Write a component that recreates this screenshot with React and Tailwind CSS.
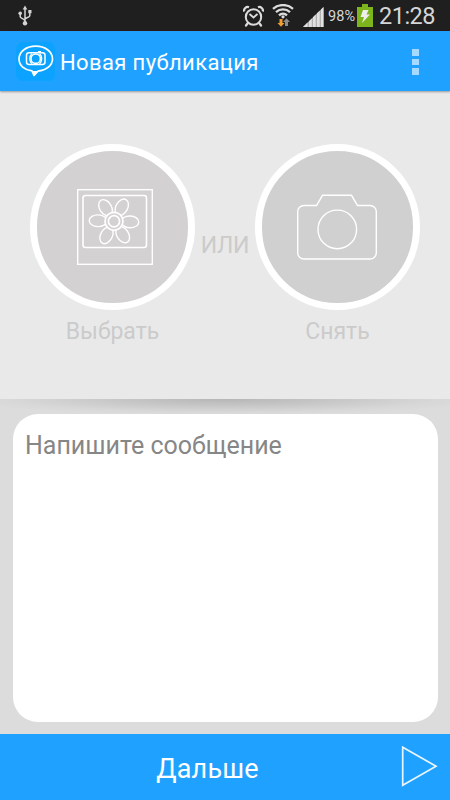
import { useState } from 'react'

function UsbIcon() {
  return (
    <svg className="w-[14px] h-[22px]" viewBox="0 0 14 22" fill="none" stroke="#d4d4d4" strokeWidth="1.5">
      <path d="M7 3v15M2.200 8.500v3.200c0 1.800 4.800 2.200 4.800 4.300M11.800 7.500v3.200c0 1.800-4.800 1.800-4.800 3.800" />
      <path d="M7 0.500l2.300 4H4.700zM10.300 5h3.200v3.200h-3.200z" fill="#d4d4d4" stroke="none" />
      <circle cx="2.200" cy="8.300" r="1.800" fill="#d4d4d4" stroke="none" />
      <circle cx="7" cy="18.300" r="2.200" fill="#d4d4d4" stroke="none" />
    </svg>
  )
}

function AlarmIcon() {
  return (
    <svg className="w-[21px] h-[22px]" viewBox="0 0 21 22" fill="none" stroke="#dcdcdc">
      <circle cx="10.500" cy="12" r="7.700" strokeWidth="2" />
      <path d="M6.500 9l4 3.500 4-3.500" strokeWidth="1.800" />
      <path d="M4.500 18.500L3 20.500M16.500 18.500l1.500 2" strokeWidth="2.200" strokeLinecap="round" />
      <path d="M1.300 6.500c-1-2.500 2-5.500 4.700-4.300M19.700 6.500c1-2.500-2-5.500-4.700-4.300" strokeWidth="2.200" />
    </svg>
  )
}

function WifiIcon() {
  return (
    <svg className="w-[22px] h-[23px]" viewBox="0 0 22 23" fill="none">
      <g stroke="#dcdcdc" strokeWidth="2.300">
        <path d="M1 4.800c5.500-5 14.500-5 20 0" />
        <path d="M4 8.200c4-3.700 10-3.700 14 0" />
        <path d="M7 11.400c2.300-2.200 5.700-2.200 8 0" />
      </g>
      <circle cx="11" cy="12.800" r="1.600" fill="#dcdcdc" />
      <path d="M7.500 15h3v4h2L9 22.700 5.500 19h2z" fill="#f0a030" />
      <path d="M13 22v-4h-2l3.500-3.700L18 18h-2v4z" fill="#8c8c8c" />
    </svg>
  )
}

function SignalIcon() {
  return (
    <svg className="w-[21px] h-[20px]" viewBox="0 0 21 20">
      <path d="M0 20L20.500 0v20z" fill="#b0b0b0" />
      <path d="M0 20l4.500-4.400V20zM6 14.200l2.800-2.800V20H6zM10 10.200l2.700-2.600V20H10zM14 6.300l2.700-2.600V20H14zM18 2.400L20.500 0v20H18z" fill="#e0e0e0" />
    </svg>
  )
}

function BatteryIcon() {
  return (
    <svg className="w-[16px] h-[23px]" viewBox="0 0 16 23">
      <path d="M5 0h6v3h5v20H0V3h5z" fill="#7db51c" />
      <path d="M6 6h5.500l-2 4.500H13L5 19l2-6H3.500z" fill="#eee" />
    </svg>
  )
}

function StatusBar() {
  return (
    <div className="h-[31px] shrink-0 flex items-start bg-[#1f1f1f] border-b border-[#2c1c1a] text-[#d6d6d6]">
      <div className="ml-[18px] mt-[5px]"><UsbIcon /></div>
      <div className="ml-auto mt-[5px]"><AlarmIcon /></div>
      <div className="ml-[8px] mt-[4px]"><WifiIcon /></div>
      <div className="ml-[9px] mt-[7px]"><SignalIcon /></div>
      <span className="ml-[4px] mt-[7px] w-[29px] text-[14.500px] leading-[20px] tracking-[0.150px] whitespace-nowrap">98%</span>
      <div className="mt-[4px]"><BatteryIcon /></div>
      <span className="ml-[6px] mt-[2px] w-[71px] text-[23.500px] leading-[28px] tracking-[-0.500px] whitespace-nowrap">21:28</span>
    </div>
  )
}

function AppLogo() {
  return (
    <svg className="w-[39px] h-[39px]" viewBox="0 0 39 39" fill="none" stroke="#fff">
      <rect width="39" height="39" rx="7" fill="#0ba3ff" stroke="none" />
      <path d="M16 28.900C8.500 28 3 23.500 3 17 3 9.500 10.500 4.200 19.700 4.200S36.500 9.500 36.500 17c0 6.300-6 11.300-14.500 12.200L18 33.500z" strokeWidth="1.700" strokeLinejoin="round" />
      <path d="M16.500 29h5L18 34z" fill="#fff" stroke="none" />
      <rect x="10.500" y="10.700" width="18.500" height="11.800" rx="2.500" strokeWidth="1.500" />
      <path d="M16 11.500c-3 3-3 7.500 0 10.500M23.500 11.500c3 3 3 7.500 0 10.500M22 9.700h3" strokeWidth="1.200" />
      <circle cx="19.700" cy="16.700" r="4.700" strokeWidth="1.600" />
    </svg>
  )
}

function PhotoIcon() {
  return (
    <svg className="w-[76px] h-[76px]" viewBox="0 0 76 76" fill="none" stroke="#fff" strokeWidth="1.400">
      <rect x="0.700" y="0.700" width="74.600" height="74.600" />
      <rect x="6" y="6.500" width="63.500" height="52" rx="2.500" strokeWidth="1.600" />
      {[2, 57, 118, 182, 238, 299].map((angle) => (
        <ellipse key={angle} cx="53" cy="32.300" rx="8.800" ry="5.900" transform={`rotate(${angle} 37 32.300)`} />
      ))}
      <circle cx="37" cy="32.300" r="9" fill="#d3d1d2" strokeWidth="1.700" />
      <circle cx="37" cy="32.300" r="5.600" strokeWidth="1.700" />
    </svg>
  )
}

function CameraIcon() {
  return (
    <svg className="w-[80px] h-[66px]" viewBox="0 0 80 66" fill="none" stroke="#fff" strokeWidth="1.400">
      <path d="M7 11.500h12.500L25.500 1.300h29L60.500 11.500H73a6.300 6.300 0 0 1 6.300 6.300v41a6.300 6.300 0 0 1-6.300 6.200H7a6.300 6.300 0 0 1-6.300-6.200v-41A6.300 6.300 0 0 1 7 11.500z" />
      <circle cx="40.300" cy="35.400" r="19.300" />
    </svg>
  )
}

export default function App() {
  const [message, setMessage] = useState('')

  return (
    <div className="w-[450px] h-[800px] flex flex-col overflow-hidden bg-[#dcdcdc] font-[Roboto,sans-serif]">
      <StatusBar />

      <header className="relative z-10 h-[60px] shrink-0 flex items-center bg-[#1fa2ff] pl-[16px] pr-[31px] shadow-[0_1px_2px_rgba(0,0,0,0.35)]">
        <AppLogo />
        <h1 className="ml-[5px] pt-[3px] text-[22px] leading-[28px] tracking-[0.380px] text-white whitespace-nowrap">Новая публикация</h1>
        <button type="button" className="ml-auto mt-[2px] flex flex-col gap-[3px]">
          <span className="w-[7px] h-[6.500px] bg-[#a5d9ff]" />
          <span className="w-[7px] h-[6.500px] bg-[#a5d9ff]" />
          <span className="w-[7px] h-[6.500px] bg-[#a5d9ff]" />
        </button>
      </header>

      {/* Photo source */}
      <section className="h-[308px] shrink-0 flex justify-between px-[30px] pt-[53px] bg-[#e9e9e9] text-[#cbcbcb] text-[23px] leading-[28px]">
        <button type="button" className="w-[165px] flex flex-col items-center">
          <span className="w-[165px] h-[166px] rounded-full border-[7.500px] border-white bg-[#d3d1d2] flex items-center justify-center pl-[4px]">
            <PhotoIcon />
          </span>
          <span className="mt-[8px]">Выбрать</span>
        </button>
        <span className="mt-[88px] tracking-[-0.300px] whitespace-nowrap">ИЛИ</span>
        <button type="button" className="w-[165px] flex flex-col items-center">
          <span className="w-[165px] h-[166px] rounded-full border-[7.500px] border-white bg-[#d0d0d0] flex items-center justify-center">
            <CameraIcon />
          </span>
          <span className="mt-[8px]">Снять</span>
        </button>
      </section>

      {/* Message */}
      <section className="h-[335px] shrink-0 px-[12.500px] pt-[15px] pb-[12px] bg-[radial-gradient(ellipse_260px_16px_at_50%_0,#b6b6b6,#c8c8c8_45%,#d7d7d7_80%,#dcdcdc)]">
        <textarea
          value={message}
          onChange={(e) => setMessage(e.target.value)}
          placeholder="Напишите сообщение"
          className="block w-full h-[308px] resize-none rounded-[25px] bg-white px-[12.500px] pt-[17px] text-[25px] leading-[30px] text-[#444] placeholder:text-[#868686] focus:outline-none"
        />
      </section>

      <footer className="h-[66px] shrink-0 flex items-center bg-[#1fa2ff] pr-[12px]">
        <span className="flex-1 pl-[14px] pt-[4px] text-center text-[27px] leading-[32px] tracking-[0.150px] text-white">Дальше</span>
        <svg className="w-[37px] h-[42px]" viewBox="0 0 37 42" fill="none" stroke="#e8f5ff" strokeWidth="1.700">
          <path d="M1.700 1.200v38L35 20.200z" />
        </svg>
      </footer>
    </div>
  )
}
